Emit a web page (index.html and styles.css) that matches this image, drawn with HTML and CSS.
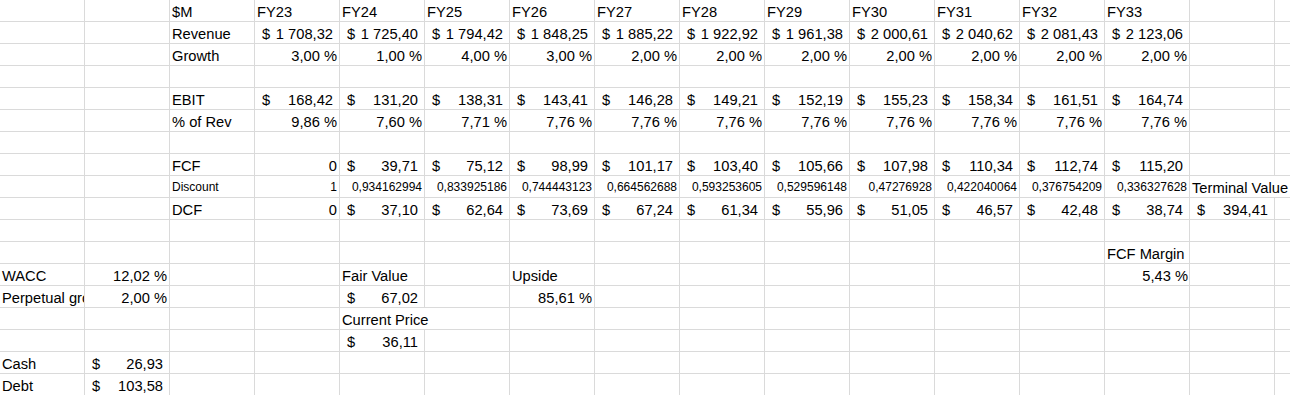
FILE: index.html
```html
<!DOCTYPE html>
<html lang="en">
<head>
<meta charset="utf-8">
<title>DCF</title>
<link rel="stylesheet" href="styles.css">
</head>
<body>
<div class="sheet">
  <!-- row 0 -->
  <div class="c"></div><div class="c"></div><div class="c t">$M</div>
  <div class="c t">FY23</div><div class="c t">FY24</div><div class="c t">FY25</div><div class="c t">FY26</div><div class="c t">FY27</div><div class="c t">FY28</div><div class="c t">FY29</div><div class="c t">FY30</div><div class="c t">FY31</div><div class="c t">FY32</div><div class="c t">FY33</div>
  <div class="c"></div><div class="c"></div>
  <!-- row 1 -->
  <div class="c"></div><div class="c"></div><div class="c t">Revenue</div>
  <div class="c a"><span>$</span><span>1 708,32</span></div>
  <div class="c a"><span>$</span><span>1 725,40</span></div>
  <div class="c a"><span>$</span><span>1 794,42</span></div>
  <div class="c a"><span>$</span><span>1 848,25</span></div>
  <div class="c a"><span>$</span><span>1 885,22</span></div>
  <div class="c a"><span>$</span><span>1 922,92</span></div>
  <div class="c a"><span>$</span><span>1 961,38</span></div>
  <div class="c a"><span>$</span><span>2 000,61</span></div>
  <div class="c a"><span>$</span><span>2 040,62</span></div>
  <div class="c a"><span>$</span><span>2 081,43</span></div>
  <div class="c a"><span>$</span><span>2 123,06</span></div>
  <div class="c"></div><div class="c"></div>
  <!-- row 2 -->
  <div class="c"></div><div class="c"></div><div class="c t">Growth</div>
  <div class="c n">3,00 %</div><div class="c n">1,00 %</div><div class="c n">4,00 %</div><div class="c n">3,00 %</div><div class="c n">2,00 %</div><div class="c n">2,00 %</div><div class="c n">2,00 %</div><div class="c n">2,00 %</div><div class="c n">2,00 %</div><div class="c n">2,00 %</div><div class="c n">2,00 %</div>
  <div class="c"></div><div class="c"></div>
  <!-- row 3 -->
  <div class="c"></div><div class="c"></div><div class="c"></div><div class="c"></div><div class="c"></div><div class="c"></div><div class="c"></div><div class="c"></div><div class="c"></div><div class="c"></div><div class="c"></div><div class="c"></div><div class="c"></div><div class="c"></div><div class="c"></div><div class="c"></div>
  <!-- row 4 -->
  <div class="c"></div><div class="c"></div><div class="c t">EBIT</div>
  <div class="c a"><span>$</span><span>168,42</span></div>
  <div class="c a"><span>$</span><span>131,20</span></div>
  <div class="c a"><span>$</span><span>138,31</span></div>
  <div class="c a"><span>$</span><span>143,41</span></div>
  <div class="c a"><span>$</span><span>146,28</span></div>
  <div class="c a"><span>$</span><span>149,21</span></div>
  <div class="c a"><span>$</span><span>152,19</span></div>
  <div class="c a"><span>$</span><span>155,23</span></div>
  <div class="c a"><span>$</span><span>158,34</span></div>
  <div class="c a"><span>$</span><span>161,51</span></div>
  <div class="c a"><span>$</span><span>164,74</span></div>
  <div class="c"></div><div class="c"></div>
  <!-- row 5 -->
  <div class="c"></div><div class="c"></div><div class="c t">% of Rev</div>
  <div class="c n">9,86 %</div><div class="c n">7,60 %</div><div class="c n">7,71 %</div><div class="c n">7,76 %</div><div class="c n">7,76 %</div><div class="c n">7,76 %</div><div class="c n">7,76 %</div><div class="c n">7,76 %</div><div class="c n">7,76 %</div><div class="c n">7,76 %</div><div class="c n">7,76 %</div>
  <div class="c"></div><div class="c"></div>
  <!-- row 6 -->
  <div class="c"></div><div class="c"></div><div class="c"></div><div class="c"></div><div class="c"></div><div class="c"></div><div class="c"></div><div class="c"></div><div class="c"></div><div class="c"></div><div class="c"></div><div class="c"></div><div class="c"></div><div class="c"></div><div class="c"></div><div class="c"></div>
  <!-- row 7 -->
  <div class="c"></div><div class="c"></div><div class="c t">FCF</div>
  <div class="c n">0</div>
  <div class="c a"><span>$</span><span>39,71</span></div>
  <div class="c a"><span>$</span><span>75,12</span></div>
  <div class="c a"><span>$</span><span>98,99</span></div>
  <div class="c a"><span>$</span><span>101,17</span></div>
  <div class="c a"><span>$</span><span>103,40</span></div>
  <div class="c a"><span>$</span><span>105,66</span></div>
  <div class="c a"><span>$</span><span>107,98</span></div>
  <div class="c a"><span>$</span><span>110,34</span></div>
  <div class="c a"><span>$</span><span>112,74</span></div>
  <div class="c a"><span>$</span><span>115,20</span></div>
  <div class="c"></div><div class="c"></div>
  <!-- row 8 -->
  <div class="c"></div><div class="c"></div><div class="c t s">Discount</div>
  <div class="c n s">1</div>
  <div class="c n s">0,934162994</div>
  <div class="c n s">0,833925186</div>
  <div class="c n s">0,744443123</div>
  <div class="c n s">0,664562688</div>
  <div class="c n s">0,593253605</div>
  <div class="c n s">0,529596148</div>
  <div class="c n s">0,47276928</div>
  <div class="c n s">0,422040064</div>
  <div class="c n s">0,376754209</div>
  <div class="c n s">0,336327628</div>
  <div class="c t wide">Terminal Value</div>
  <!-- row 9 -->
  <div class="c"></div><div class="c"></div><div class="c t">DCF</div>
  <div class="c n">0</div>
  <div class="c a"><span>$</span><span>37,10</span></div>
  <div class="c a"><span>$</span><span>62,64</span></div>
  <div class="c a"><span>$</span><span>73,69</span></div>
  <div class="c a"><span>$</span><span>67,24</span></div>
  <div class="c a"><span>$</span><span>61,34</span></div>
  <div class="c a"><span>$</span><span>55,96</span></div>
  <div class="c a"><span>$</span><span>51,05</span></div>
  <div class="c a"><span>$</span><span>46,57</span></div>
  <div class="c a"><span>$</span><span>42,48</span></div>
  <div class="c a"><span>$</span><span>38,74</span></div>
  <div class="c a"><span>$</span><span>394,41</span></div>
  <div class="c"></div>
  <!-- row 10 -->
  <div class="c"></div><div class="c"></div><div class="c"></div><div class="c"></div><div class="c"></div><div class="c"></div><div class="c"></div><div class="c"></div><div class="c"></div><div class="c"></div><div class="c"></div><div class="c"></div><div class="c"></div><div class="c"></div><div class="c"></div><div class="c"></div>
  <!-- row 11 -->
  <div class="c"></div><div class="c"></div><div class="c"></div><div class="c"></div><div class="c"></div><div class="c"></div><div class="c"></div><div class="c"></div><div class="c"></div><div class="c"></div><div class="c"></div><div class="c"></div><div class="c"></div>
  <div class="c t">FCF Margin</div>
  <div class="c"></div><div class="c"></div>
  <!-- row 12 -->
  <div class="c t">WACC</div><div class="c n">12,02 %</div><div class="c"></div><div class="c"></div>
  <div class="c t">Fair Value</div><div class="c"></div>
  <div class="c t">Upside</div>
  <div class="c"></div><div class="c"></div><div class="c"></div><div class="c"></div><div class="c"></div><div class="c"></div>
  <div class="c n tight">5,43 %</div>
  <div class="c"></div><div class="c"></div>
  <!-- row 13 -->
  <div class="c t">Perpetual growth</div><div class="c n">2,00 %</div><div class="c"></div><div class="c"></div>
  <div class="c a"><span>$</span><span>67,02</span></div><div class="c"></div>
  <div class="c n">85,61 %</div>
  <div class="c"></div><div class="c"></div><div class="c"></div><div class="c"></div><div class="c"></div><div class="c"></div><div class="c"></div><div class="c"></div><div class="c"></div>
  <!-- row 14 -->
  <div class="c"></div><div class="c"></div><div class="c"></div><div class="c"></div>
  <div class="c t wide">Current Price</div>
  <div class="c"></div><div class="c"></div><div class="c"></div><div class="c"></div><div class="c"></div><div class="c"></div><div class="c"></div><div class="c"></div><div class="c"></div><div class="c"></div>
  <!-- row 15 -->
  <div class="c"></div><div class="c"></div><div class="c"></div><div class="c"></div>
  <div class="c a"><span>$</span><span>36,11</span></div>
  <div class="c"></div><div class="c"></div><div class="c"></div><div class="c"></div><div class="c"></div><div class="c"></div><div class="c"></div><div class="c"></div><div class="c"></div><div class="c"></div><div class="c"></div>
  <!-- row 16 -->
  <div class="c t">Cash</div><div class="c a"><span>$</span><span>26,93</span></div>
  <div class="c"></div><div class="c"></div><div class="c"></div><div class="c"></div><div class="c"></div><div class="c"></div><div class="c"></div><div class="c"></div><div class="c"></div><div class="c"></div><div class="c"></div><div class="c"></div><div class="c"></div><div class="c"></div>
  <!-- row 17 -->
  <div class="c t">Debt</div><div class="c a"><span>$</span><span>103,58</span></div>
  <div class="c"></div><div class="c"></div><div class="c"></div><div class="c"></div><div class="c"></div><div class="c"></div><div class="c"></div><div class="c"></div><div class="c"></div><div class="c"></div><div class="c"></div><div class="c"></div><div class="c"></div><div class="c"></div>
</div>
</body>
</html>
```

FILE: styles.css
```css
html, body {
  margin: 0;
  padding: 0;
  background: #ffffff;
  overflow: hidden;
}

.sheet {
  display: grid;
  grid-template-columns: repeat(16, 85px);
  grid-auto-rows: 22px;
  width: 1360px;
  font-family: "Liberation Sans", Arial, sans-serif;
  font-size: 14.7px;
  color: #000000;
}

.c {
  box-sizing: border-box;
  border-right: 1px solid #dadada;
  border-bottom: 1px solid #dadada;
  display: flex;
  align-items: flex-end;
  white-space: pre;
  overflow: hidden;
  line-height: 17px;
  padding-bottom: 0;
}

.t {
  justify-content: flex-start;
  padding-left: 2px;
}

.n {
  justify-content: flex-end;
  padding-right: 2px;
}

.tight {
  padding-right: 1px;
}

.a {
  justify-content: space-between;
  padding-left: 7px;
  padding-right: 6px;
}

.s {
  font-size: 12px;
  padding-bottom: 1px;
}

.wide {
  grid-column: span 2;
}
```
